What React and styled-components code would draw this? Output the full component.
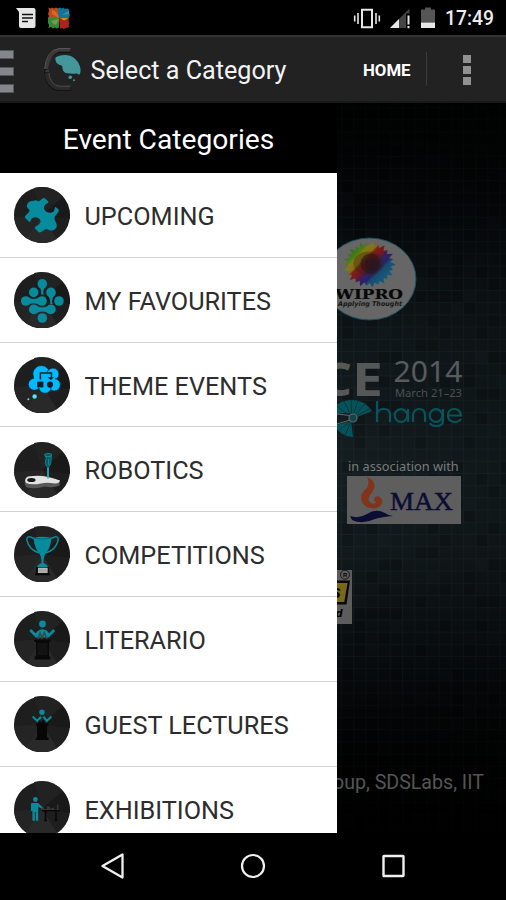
import React from "react";
import styled, { createGlobalStyle } from "styled-components";

const GlobalStyle = createGlobalStyle`
     * {
          box-sizing: border-box;
     }
     body {
          margin: 0;
          background: #000;
          font-family: Roboto, sans-serif;
     }
`;

const Screen = styled.div`
     width: 506px;
     height: 900px;
     display: flex;
     flex-direction: column;
     overflow: hidden;
     background: #000;
`;
const StatusBar = styled.div`
     height: 35px;
     flex-shrink: 0;
     display: flex;
     justify-content: space-between;
     align-items: center;
     padding: 0 11px 0 16px;
`;
const StatusGroup = styled.div`
     display: flex;
     align-items: center;
`;
const Clock = styled.span`
     width: 50px;
     color: #ececec;
     font-size: 19.3px;
     font-weight: 500;
     line-height: 22px;
     margin-left: 10px;
     padding-top: 3px;
`;
const ActionBar = styled.header`
     height: 68px;
     flex-shrink: 0;
     display: flex;
     align-items: center;
     background: #222;
     border-top: 2px solid #333;
     border-bottom: 2px solid #191919;
`;
const DrawerToggle = styled.div`
     width: 14px;
     height: 43px;
     display: flex;
     flex-direction: column;
     justify-content: space-between;
     margin: 4px 28px 0 0;
`;
const ToggleBar = styled.span`
     height: 9px;
     background: #85868b;
     border: solid #55565a;
     border-width: 1px 1px 1px 0;
`;
const BarTitle = styled.h1`
     margin: 4px 0 0 6.5px;
     width: 272.5px;
     color: #f3f3f3;
     font-size: 25.15px;
     font-weight: 400;
     line-height: 32px;
     white-space: nowrap;
`;
const HomeButton = styled.button`
     border: 0;
     padding: 1px 0 0;
     width: 64px;
     height: 34px;
     background: none;
     border-right: 1px solid #3b3b3b;
     color: #fff;
     font: 700 16.8px Roboto, sans-serif;
     text-align: left;
`;
const Overflow = styled.div`
     display: flex;
     flex-direction: column;
     gap: 3px;
     margin: 1px 0 0 36px;
`;
const OverflowDot = styled.span`
     width: 8px;
     height: 8px;
     background: #919191;
`;

const Content = styled.div`
     height: 729.5px;
     flex-shrink: 0;
     display: flex;
`;
const Drawer = styled.nav`
     width: 337px;
     height: 100%;
     flex-shrink: 0;
     overflow: hidden;
     background: #fff;
`;
const DrawerTitle = styled.h2`
     margin: 0;
     height: 70px;
     background: #000;
     color: #fff;
     font-size: 28.2px;
     font-weight: 400;
     line-height: 73px;
     text-align: center;
`;
const Row = styled.div`
     height: 84.8px;
     display: flex;
     align-items: center;
     gap: 14.5px;
     padding: 0.6px 0 0 14px;
     border-bottom: 1px solid #d2d2d2;
     color: #2d2d2d;
     font-size: 25.25px;
     white-space: nowrap;
`;
const RowLabel = styled.span`
     line-height: 30px;
     padding-top: 3.8px;
`;
const BadgeSvg = styled.svg`
     flex-shrink: 0;
`;

const Backdrop = styled.main`
     flex: 1;
     position: relative;
     overflow: hidden;
     display: flex;
     flex-direction: column;
     background: linear-gradient(
          #010202 0,
          #070b0d 110px,
          #10171a 235px,
          #141d20 370px,
          #12191c 450px,
          #090e10 540px,
          #030405 650px,
          #000 729px
     );
`;
const Texture = styled.svg`
     position: absolute;
     inset: 0;
`;
const Art = styled.svg`
     display: block;
     position: relative;
     flex-shrink: 0;
     overflow: hidden;
     margin-top: ${({ $top }) => $top}px;
     margin-left: ${({ $left }) => $left || 0}px;
`;
const Association = styled.div`
     position: relative;
     margin: 18px 0 1px 11px;
     color: #777b7c;
     font: 12.75px/16px "Noto Sans", sans-serif;
     white-space: nowrap;
`;
const Credits = styled.div`
     position: relative;
     margin: 146px 0 0 -4px;
     color: #555;
     font-size: 19.6px;
     line-height: 26px;
     white-space: nowrap;
`;
const NavBar = styled.footer`
     height: 67.5px;
     flex-shrink: 0;
     display: flex;
     align-items: center;
     justify-content: center;
     gap: 114px;
`;

const TEAL = "#078b9d";

const Badge = ({ children, cut = true }) => (
     <BadgeSvg width="56" height="56" viewBox="0 0 56 56">
          <circle cx="28" cy={cut ? 28.5 : 28} r="28" fill="#1e1e1e" />
          <path d="M28 28L12 51Q28 61 43 52Z" fill="#292929" />
          <path d="M28 28L0 30Q1 43 12 51Z" fill="#242424" />
          <path d="M28 28L20 1Q38-3 49 10Z" fill="#222" />
          <path d="M28 28L49 10Q56 19 56 32Z" fill="#191919" />
          {children}
     </BadgeSvg>
);

const Puzzle = () => (
     <Badge cut={false}>
          <path
               fill={TEAL}
               d="M19 14Q22 12.5 24.5 14.5L29 11.2Q30 10.5 31 11.4L34.2 14.2Q35 15 34 16Q29.3 18 30 21.8Q31.8 26 36.5 25.8Q40.6 25 40.6 21.4Q41 19.5 42.3 20.4L44.6 22.4Q45.4 23.3 44.6 24.4L40.8 29.5Q40 31 40.8 33L42.6 37Q43.5 41.6 39.8 43Q36.6 44.4 33 42.2Q32 41.8 31 42.6L26.5 45.2Q25.5 45.8 24.5 45L21.3 41.8Q20.3 40.8 21.5 39.7Q26.4 37.4 26.6 34Q25.4 30.2 21 30.2Q17 30.6 16.6 34Q16 35.5 14.8 34.6L11.2 31Q10.5 30 11.3 28.8L15 25Q16 24 15 22.6Q11.8 20 13.2 17.2Q15 13.5 19 14Z"
          />
     </Badge>
);
const Network = () => (
     <Badge>
          <g fill={TEAL}>
               <circle cx="28.3" cy="11.8" r="4.8" />
               <circle cx="19.7" cy="20.4" r="4.8" />
               <circle cx="37" cy="20.4" r="4.8" />
               <circle cx="11.7" cy="29" r="4.8" />
               <circle cx="28" cy="29" r="4.8" />
               <circle cx="45" cy="29" r="4.8" />
               <circle cx="19.7" cy="37.4" r="4.8" />
               <circle cx="37" cy="37.4" r="4.8" />
               <circle cx="28.3" cy="46" r="4.8" />
               <path d="M13.5 24.8Q19.8 29.2 26 24.8V33.2Q19.8 29.4 13.5 33.2Z" />
               <path d="M21.5 33Q28.3 38 35 33V41.8Q28.3 37.4 21.5 41.8Z" />
               <path d="M24 13.5Q28.3 17.5 27 22.5H29.7Q28.3 17.5 32.6 13.5Z" />
               <path d="M32.6 22Q37.4 27.5 36 32H38.6Q37 27 41.4 22Z" />
          </g>
     </Badge>
);
const Cloud = () => (
     <Badge>
          <g fill="#00b9ff" stroke="#0b2028" strokeWidth=".7">
               <circle cx="27.3" cy="17" r="8.5" />
               <circle cx="39" cy="17" r="6" />
               <circle cx="20.3" cy="27.3" r="6" />
               <circle cx="40.2" cy="27.8" r="6.2" />
               <circle cx="31" cy="30" r="6.3" />
          </g>
          <rect x="20" y="15" width="21" height="16" rx="5" fill="#00b9ff" />
          <path
               d="M26.4 22.5V16H37.4V21"
               fill="none"
               stroke="#111b22"
               strokeWidth="1.5"
          />
          <path d="M33.6 20.3h6.4l-3.2 2.8z" fill="#111b22" />
          <rect x="23.2" y="24.6" width="6.2" height="5.8" fill="#111b22" />
          <circle cx="36" cy="27.6" r="3.1" fill="#111b22" />
          <circle cx="20.6" cy="39.5" r="2.2" fill="#50e8f8" />
          <circle cx="14.4" cy="42.2" r="1" fill="#50e8f8" />
     </Badge>
);
const Robot = () => (
     <Badge>
          <path
               d="M11 38.5Q10 43.5 13 45.5Q22 47.5 31 44.5Q39 46.5 45.5 43.5V38Z"
               fill="#595959"
          />
          <path
               d="M14 34.5Q25 33 33 34.8Q42 37 46 38.5Q45.5 41.5 41 41.5Q33 40 27 41.4Q18 43.5 12 41Q9.5 37 14 34.5Z"
               fill="#e2e2e2"
          />
          <ellipse cx="17.4" cy="37.9" rx="4.2" ry="2" fill="#171717" />
          <path
               d="M30.3 12.3Q34 10.7 37.5 12L36.7 21.5L34 26.5L31.3 21.5L32.2 15.3Z"
               fill="#0b5760"
               stroke="#12808c"
               strokeWidth="1"
          />
          <path d="M31 14.2Q34 15.8 37 14M34.7 17v6" stroke="#149dab" fill="none" strokeWidth=".8" />
          <path d="M34 26V36.5" stroke="#22b5c0" strokeWidth="1.7" />
     </Badge>
);
const Trophy = () => (
     <Badge>
          <path
               d="M20 12.5Q12.5 8.5 12.8 14Q15 24 25.5 27M37 12.5Q44.5 8.5 44.2 14Q42 24 31.5 27"
               fill="none"
               stroke={TEAL}
               strokeWidth="1.5"
          />
          <path
               d="M19.5 12Q28.5 9.4 37.5 12Q36.5 22 31.8 27.3Q29.4 30.8 29.4 37Q34 39 33.7 41H23.2Q23 39 27.6 37Q27.6 30.8 25.2 27.3Q20.5 22 19.5 12Z"
               fill={TEAL}
          />
          <path d="M20 12Q28 14.4 37 12" stroke="#076b78" fill="none" />
          <path d="M22.2 41h12.5v6.5h1.2v1.8H21v-1.8h1.2z" fill="#070707" />
          <rect x="24.2" y="42" width="9" height="4.8" fill="#a9a9a9" stroke="#ddd" strokeWidth=".5" />
     </Badge>
);
const Literario = () => (
     <Badge>
          <circle cx="28.5" cy="13" r="3.4" fill={TEAL} />
          <path
               d="M23.5 20.5Q28.5 16 33.2 20.5L35.2 26.5H21.5Z"
               fill={TEAL}
          />
          <path
               d="M16.2 19L21.5 24.2L26 20M40.3 19L35 24.2L31 20"
               fill="none"
               stroke={TEAL}
               strokeWidth="2.8"
          />
          <path d="M24 28L26 22L28 27L30.2 21.7L33 28" stroke="#3a4648" fill="none" strokeWidth="1.5" />
          <path
               d="M20.3 28.5H36.5V31H35V45.5H36.4V48.5H20.5V45.5H22V31H20.3Z"
               fill="#090909"
          />
          <path d="M23.5 32h10v12h-10z" fill="#131313" />
     </Badge>
);
const Guest = () => (
     <Badge>
          <circle cx="28" cy="16.3" r="2.7" fill={TEAL} />
          <path
               d="M18.7 20.5L23.3 25L27 20.7M37.4 20.5L32.8 25L29.4 20.7"
               fill="none"
               stroke={TEAL}
               strokeWidth="2.1"
          />
          <path
               d="M22 27.5H24L25 23.5L27 27L29.5 23.5L30.5 27.5H34.5V30H33V41.5H34.5V44H21.8V41.5H23V30H22Z"
               fill="#070707"
          />
     </Badge>
);
const Exhibit = () => (
     <Badge>
          <circle cx="21.4" cy="18.5" r="2.4" fill={TEAL} />
          <path
               d="M17.5 22H24L29 26.5L28 28L24.2 25.5V39.8H21.8V31H20.8V39.8H18.4V30H17V23Z"
               fill={TEAL}
          />
          <path d="M28 29.5h18M31.5 30v9.5M42 30v9.5M30 39.5h3M40.5 39.5h3" stroke="#080808" strokeWidth="1.6" />
          <path d="M27.5 29V26.5H30V28H33V25L36 26V28L40 26.5V28.5H43V23.5H44.5V29Z" fill="#383838" />
     </Badge>
);

const categories = [
     { label: "UPCOMING", Icon: Puzzle },
     { label: "MY FAVOURITES", Icon: Network },
     { label: "THEME EVENTS", Icon: Cloud },
     { label: "ROBOTICS", Icon: Robot },
     { label: "COMPETITIONS", Icon: Trophy },
     { label: "LITERARIO", Icon: Literario },
     { label: "GUEST LECTURES", Icon: Guest },
     { label: "EXHIBITIONS", Icon: Exhibit },
];

const LogoSvg = styled.svg`
     flex-shrink: 0;
`;
const BrainLogo = () => (
     <LogoSvg width="42" height="48" viewBox="0 0 42 48">
          <path
               d="M29 3H17Q3 4.5 2 24Q2 34 6 40Q10 46 18 46H29V42H18Q12 41 9 36L6.5 28H4V25L6 19Q10 9 18 8H29Z"
               fill="#131313"
          />
          <path
               d="M28.5 5H17Q7 7 4.2 24"
               fill="none"
               stroke="#3a3a3a"
               strokeWidth="3.6"
          />
          <path
               d="M28.5 3.6H17Q4 5 2.6 24"
               fill="none"
               stroke="#646464"
               strokeWidth=".8"
          />
          <path
               d="M4.6 28Q6.5 42 17 43H28.5"
               fill="none"
               stroke="#2a2a2a"
               strokeWidth="3.8"
          />
          <path d="M6.8 28Q8.5 40 17 41.2H28.5M3 26H7" fill="none" stroke="#585858" strokeWidth=".8" />
          <path
               d="M13.5 12.5Q17 9.8 24 10Q34.5 11 38 21.5Q39.5 27 37.3 29.8L34.7 28.5Q30 29 23.5 28Q20 26 20.3 21Q12 18.5 13.5 12.5Z"
               fill="#43979b"
          />
          <circle cx="28.3" cy="32.3" r="1.8" fill="#43979b" />
          <circle cx="32" cy="35.3" r="1" fill="#43979b" />
     </LogoSvg>
);

// ragged flower outline, alternating long and short tips
const flower = Array.from({ length: 52 }, (_, i) => {
     const a = (i * Math.PI) / 26;
     const r = i % 2 ? 21 : i % 4 ? 24.5 : 26.5;
     return `${(r * Math.cos(a)).toFixed(1)},${(r * Math.sin(a) * 0.88).toFixed(1)}`;
}).join(" ");

const Wipro = () => (
     <Art width="82" height="84" viewBox="0 0 82 84" $top={134} $left={-2}>
          <ellipse cx="34.5" cy="42" rx="46.5" ry="41" fill="#666" stroke="#174e62" strokeWidth="1" />
          <defs>
               <linearGradient id="flower" x1="0" y1=".15" x2=".85" y2=".9">
                    <stop offset=".08" stopColor="#286b22" />
                    <stop offset=".24" stopColor="#4c7b17" />
                    <stop offset=".28" stopColor="#857813" />
                    <stop offset=".38" stopColor="#857013" />
                    <stop offset=".42" stopColor="#7c2317" />
                    <stop offset=".54" stopColor="#731521" />
                    <stop offset=".59" stopColor="#3b205a" />
                    <stop offset=".7" stopColor="#25246a" />
                    <stop offset=".75" stopColor="#184c70" />
                    <stop offset="1" stopColor="#156281" />
               </linearGradient>
          </defs>
          <g transform="translate(34.5 27.5)">
               <polygon points={flower} fill="url(#flower)" />
               <ellipse rx="15" ry="12" cx="-1" cy="-1" fill="#33200f" opacity=".35" />
               <circle r="10" cx="1" cy="-1" fill="#281416" opacity=".6" />
               <circle r="6" cx="2" cy="0" fill="#241322" opacity=".5" />
          </g>
          <text
               x="0"
               y="62"
               fill="#080808"
               stroke="#080808"
               strokeWidth=".2"
               fontFamily="DejaVu Serif"
               fontWeight="700"
               fontSize="13.4"
               textLength="68"
               lengthAdjust="spacingAndGlyphs"
          >
               WIPRO
          </text>
          <text
               x="3"
               y="69.4"
               fill="#151515"
               fontFamily="DejaVu Sans"
               fontStyle="italic"
               fontWeight="700"
               fontSize="6.6"
               textLength="64"
               lengthAdjust="spacingAndGlyphs"
          >
               Applying Thought
          </text>
     </Art>
);

const Cognizance = () => (
     <Art width="130" height="80" viewBox="0 0 130 80" $top={39}>
          <text x="-15" y="36" fill="#565858" fontFamily="Open Sans" fontSize="47" fontWeight="700">
               C
          </text>
          <text x="15" y="36" fill="#565858" fontFamily="Open Sans" fontSize="47" fontWeight="700" textLength="31" lengthAdjust="spacingAndGlyphs">
               E
          </text>
          <text x="56.5" y="22" fill="#575c5d" fontFamily="Noto Sans" fontSize="28.5" textLength="69" lengthAdjust="spacingAndGlyphs">
               2014
          </text>
          <text x="58" y="37" fill="#4c5253" fontFamily="Noto Sans" fontSize="11.2" textLength="67" lengthAdjust="spacingAndGlyphs">
               March 21–23
          </text>
          <g fill="#04555b">
               <path d="M0 45Q4 41 13 40Q27 39 35 51L20 57Q14 51 0 54Z" />
               <path d="M0 65L14 61L16 77Q5 76 0 69Z" />
          </g>
          <path
               d="M15 58L0 46M15 58L7 41M15 58L14 40M15 58L21 41M15 58L28 44M15 58L34 48M15 60L2 70M15 60L8 75"
               stroke="#14262a"
               strokeWidth=".8"
          />
          <path d="M0 54L13 55.5M0 64L13 60" stroke="#626769" strokeWidth="1" />
          <circle cx="16" cy="58" r="4" fill="#164346" stroke="#626769" strokeWidth="1.2" />
          <g fill="none" stroke="#06555a" strokeWidth="2.2">
               <path d="M40 41V62M40 54Q41 49 47 49Q53 49 53 55V62" />
               <circle cx="64" cy="55.5" r="6.3" />
               <path d="M71 49V62M76 62V55Q77 49 82 49Q88 49 88 55V62" />
               <circle cx="99" cy="55.5" r="6.3" />
               <path d="M106 49V61Q106 66 99 66Q94 66 93 63" />
               <path d="M111 55.5H124Q123 49 117.5 49Q111 49 111 55.5Q111 62 118 62Q122 62 124 59" />
          </g>
     </Art>
);

const MaxLogo = () => (
     <Art width="114" height="48" viewBox="0 0 114 48" $top={1} $left={10}>
          <path d="M0 0h114v48H0z" fill="#5e5e5f" />
          <path
               d="M20 1Q28 4 27.5 11Q26 16 23 19Q20 24 24 27Q28 29 29 26Q27 26 27 23Q28 19 33 21Q37 25 34 29Q30 33.5 23 32Q14 30 14 21Q14 17 20 12Q23 6 20 1Z"
               fill="#80351b"
          />
          <path d="M3 40Q12 43 20 38Q29 32 38 37Q42 40 46 40Q35 41 28 43Q15 49 5 44Z" fill="#0c0d35" />
          <text x="43" y="33.5" fill="#0c0d32" stroke="#0c0d32" strokeWidth=".5" fontFamily="Liberation Serif" fontSize="26" textLength="63" lengthAdjust="spacingAndGlyphs">
               MAX
          </text>
     </Art>
);

const Sponsor = () => (
     <Art width="15" height="54" viewBox="0 0 15 54" $top={46}>
          <path d="M0 0h15v54H0z" fill="#5c5c5c" />
          <circle cx="8" cy="4.7" r="4.5" fill="none" stroke="#151515" />
          <text x="5.9" y="6.9" fontFamily="Liberation Sans" fontWeight="700" fontSize="6">R</text>
          <path d="M0 10.5H13L9.5 34.5H0Z" fill="#080808" />
          <path d="M0 13H10.5L7.3 32H0Z" fill="#786817" />
          <text x="-6" y="28" fontFamily="Liberation Sans" fontWeight="700" fontStyle="italic" fontSize="18">s</text>
          <text x="-1.5" y="47" fontFamily="DejaVu Sans" fontWeight="700" fontStyle="italic" fontSize="10">d</text>
     </Art>
);

// stable scatter of slightly darker or lighter squares
const tiles = [];
for (let r = 0; r < 60; r++) {
     for (let c = 0; c < 14; c++) {
          const n = (r * 37 + c * 61 + r * c * 13) % 17;
          if (n < 5) tiles.push({ x: c * 12.2 + 5, y: r * 12.2 + 5, dark: n < 4 });
     }
}

const Tiles = () => (
     <Texture width="169" height="729">
          <defs>
               <pattern id="grid" x="4" y="4" width="12.2" height="12.2" patternUnits="userSpaceOnUse">
                    <path d="M0 .5H12.2M.5 0V12.2" stroke="#8dafb8" strokeOpacity=".05" />
               </pattern>
               <linearGradient id="fade" x2="0" y2="1">
                    <stop offset="0" stopColor="#000" stopOpacity=".65" />
                    <stop offset=".25" stopColor="#000" stopOpacity="0" />
                    <stop offset=".75" stopColor="#000" stopOpacity="0" />
                    <stop offset="1" stopColor="#000" stopOpacity=".85" />
               </linearGradient>
               <linearGradient id="side">
                    <stop offset="0" stopColor="#000" stopOpacity="0" />
                    <stop offset="1" stopColor="#000" stopOpacity=".2" />
               </linearGradient>
          </defs>
          {tiles.map(({ x, y, dark }) => (
               <rect
                    key={`${x}-${y}`}
                    x={x}
                    y={y}
                    width="11"
                    height="11"
                    fill={dark ? "#000" : "#8dafb8"}
                    opacity={dark ? 0.13 : 0.02}
               />
          ))}
          <rect width="169" height="729" fill="url(#grid)" />
          <rect width="169" height="729" fill="url(#fade)" />
          <rect width="169" height="729" fill="url(#side)" />
     </Texture>
);

const Notifications = () => (
     <StatusGroup>
          <svg width="56" height="24" viewBox="0 0 56 24">
               <path d="M0 2H17.5Q19.5 2 19.5 4V20Q19.5 22 17.5 22H5Q3 22 3 20V6Z" fill="#e6e6e6" />
               <path d="M6 8.5H17M6 12H17M6 15.5H12" stroke="#111" strokeWidth="1.5" />
               <path d="M32.5 1.5L35 2.5 36 1.5 38 2.5 40 1.5 43 3V12L32 12 33 10 32 8 33 5z" fill="#bd4a1c" />
               <path d="M42 2l2-.5 1.5 1 1.5-1 1.5 1.2L52 2.5 53.5 5 53 7l1 2-1 3-10.5 0z" fill="#117496" />
               <path d="M32 12L43 11V21.5L41 22.5 39 21.5 37 22.5 35 21 32.5 22 33 19 32 17z" fill="#398638" />
               <path d="M43 12L53 13 52.5 15 53.5 17 52.5 19 53.5 21 50 22 48 23 46 22 44 23z" fill="#aa2517" />
               <path d="M36 4Q42 6 43 12L36 8Z" fill="#d76a26" />
               <path d="M44 12H53L48 14.5Z" fill="#d7891e" />
               <path d="M43 13L40 19Q37 18 35 15Z" fill="#6fa03e" />
               <path d="M46 9L53 5V8Z" fill="#3d94ba" />
          </svg>
     </StatusGroup>
);

const SystemStatus = () => (
     <StatusGroup>
          <svg width="82" height="24" viewBox="0 0 82 24">
               <path d="M9 3.8h10v17.4H9z" fill="none" stroke="#e7e7e7" strokeWidth="2" />
               <path d="M5 7V18M1.7 9.5V15.5M23 7V18M26.3 9.5V15.5" stroke="#e7e7e7" strokeWidth="1.6" />
               <path d="M37 22L56.5 2.5V7.5H53V22Z" fill="#444" />
               <path d="M37 22L46 13V22Z" fill="#e7e7e7" />
               <path d="M55.5 9.5V18.5M55.5 20V22.3" stroke="#e7e7e7" strokeWidth="2" />
               <path d="M68 3.5H72V1.5H78V3.5H82V16.5H68Z" fill="#555" />
               <path d="M68 16.5h14v5.5H68z" fill="#e7e7e7" />
          </svg>
          <Clock>17:49</Clock>
     </StatusGroup>
);

const App = () => {
     return (
          <>
               <GlobalStyle />
               <Screen>
                    <StatusBar>
                         <Notifications />
                         <SystemStatus />
                    </StatusBar>
                    <ActionBar>
                         <DrawerToggle>
                              <ToggleBar />
                              <ToggleBar />
                              <ToggleBar />
                         </DrawerToggle>
                         <BrainLogo />
                         <BarTitle>Select a Category</BarTitle>
                         <HomeButton>HOME</HomeButton>
                         <Overflow>
                              <OverflowDot />
                              <OverflowDot />
                              <OverflowDot />
                         </Overflow>
                    </ActionBar>
                    <Content>
                         <Drawer>
                              <DrawerTitle>Event Categories</DrawerTitle>
                              {categories.map(({ label, Icon }) => (
                                   <Row key={label}>
                                        <Icon />
                                        <RowLabel>{label}</RowLabel>
                                   </Row>
                              ))}
                         </Drawer>
                         <Backdrop>
                              <Tiles />
                              <Wipro />
                              <Cognizance />
                              <Association>in association with</Association>
                              <MaxLogo />
                              <Sponsor />
                              <Credits>oup, SDSLabs, IIT</Credits>
                         </Backdrop>
                    </Content>
                    <NavBar>
                         <svg width="26" height="28" viewBox="0 0 26 28">
                              <path d="M22.5 2.5V25.5L2.5 14Z" fill="none" stroke="#f0f0f0" strokeWidth="2.3" strokeLinejoin="round" />
                         </svg>
                         <svg width="26" height="28" viewBox="0 0 26 28">
                              <circle cx="13" cy="14" r="11" fill="none" stroke="#f0f0f0" strokeWidth="2.2" />
                         </svg>
                         <svg width="26" height="28" viewBox="0 0 26 28">
                              <rect x="3.5" y="4" width="20" height="20" rx=".6" fill="none" stroke="#f0f0f0" strokeWidth="2.4" />
                         </svg>
                    </NavBar>
               </Screen>
          </>
     );
};

export default App;
